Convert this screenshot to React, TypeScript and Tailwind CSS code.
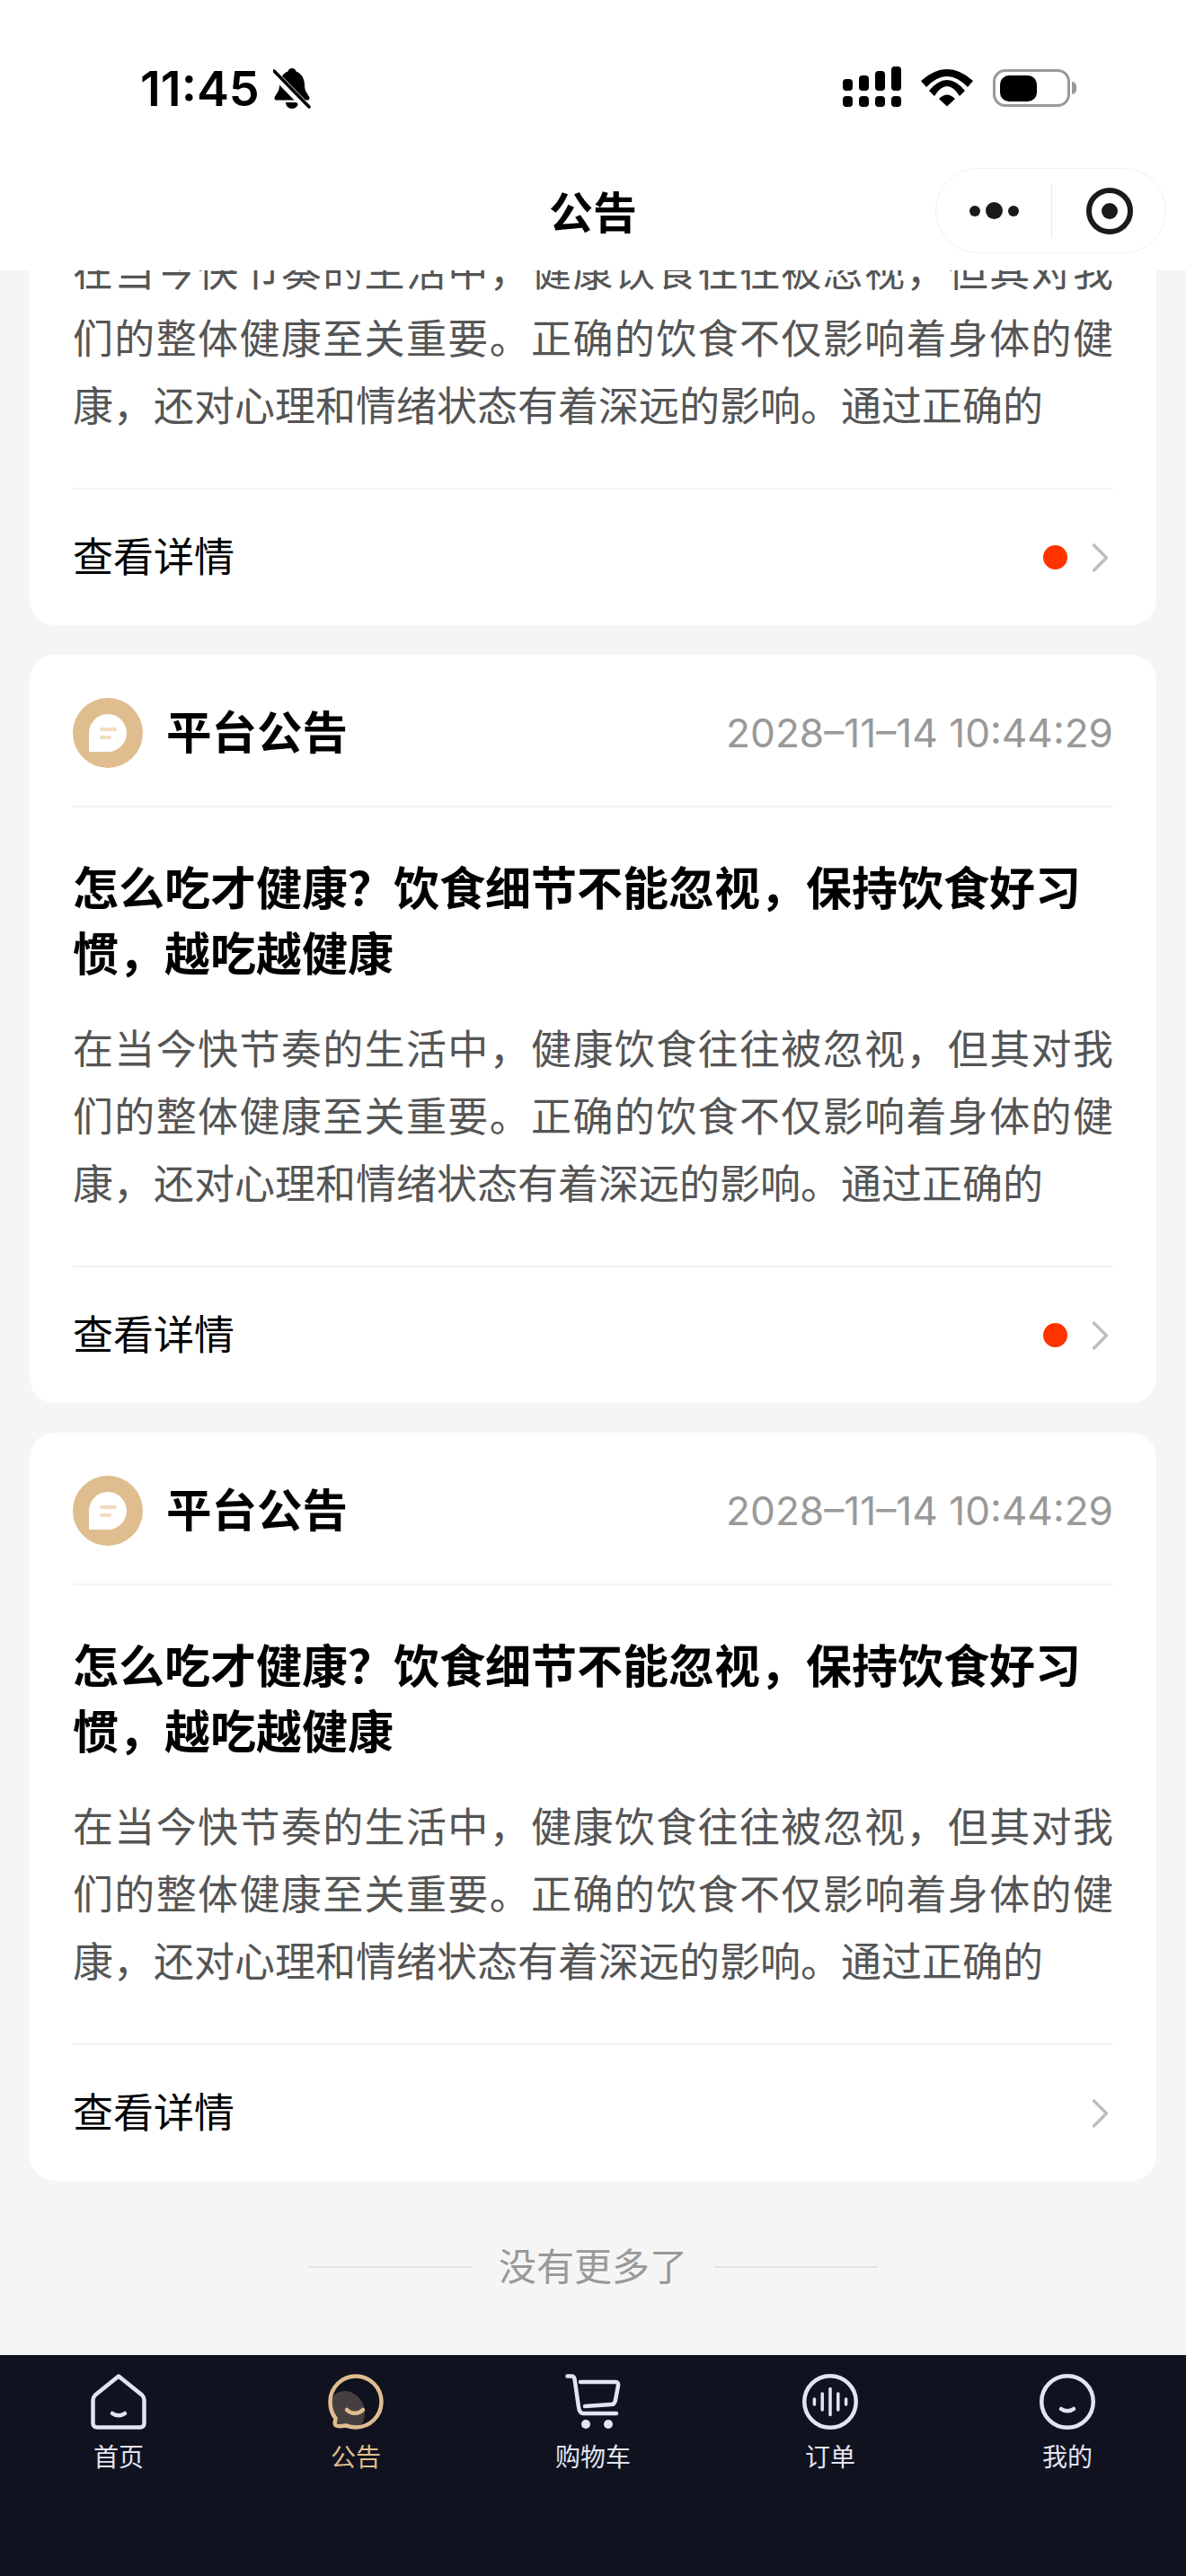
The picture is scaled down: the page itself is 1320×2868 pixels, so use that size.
const FONT = { fontFamily: '"Inter", "Noto Sans CJK SC", sans-serif' };

const notices = [{ dot: true }, { dot: true }, { dot: false }];

const TITLE = "怎么吃才健康\uFF1F饮食细节不能忽视\uFF0C保持饮食好习惯\uFF0C越吃越健康";
const BODY =
  "在当今快节奏的生活中\uFF0C健康饮食往往被忽视\uFF0C但其对我们的整体健康至关重要。正确的饮食不仅影响着身体的健康\uFF0C还对心理和情绪状态有着深远的影响。通过正确的";

function BellOff() {
  return (
    <svg width="42" height="46" viewBox="0 0 42 46" className="ml-[15px]">
      <path d="M21 0c2.500 0 4 1.500 4.500 3.500C32 6 35 12 35 19c0 6 3 9 5 12.500 1 2 .5 4-2 4H4c-2.500 0-3-2-2-4C4 28 7 25 7 19 7 12 10 6 16.500 3.500 17 1.500 18.500 0 21 0z" fill="#000" />
      <path d="M14 38h14c0 4-3 7-7 7s-7-3-7-7z" fill="#000" />
      <path d="M1 6l38 39" stroke="#fff" strokeWidth="9" />
      <path d="M1 3l39 40" stroke="#000" strokeWidth="3.500" strokeLinecap="round" />
    </svg>
  );
}

function Signal() {
  const heights = [13, 17, 22, 27];
  return (
    <div className="flex items-end gap-[7px]">
      {heights.map((h, i) => (
        <div key={i} className="flex w-[11px] flex-col gap-[6px]">
          <div className="rounded-[4px] bg-black" style={{ height: h }} />
          <div className="h-[12px] rounded-[4px] bg-black" />
        </div>
      ))}
    </div>
  );
}

function Wifi() {
  return (
    <svg width="58" height="42" viewBox="0 0 58 42" fill="#000">
      <path d="M0 13Q29-13 58 13L52 20Q29-4 6 20Z" />
      <path d="M9 24Q29 0 49 24L43 30Q29 8 15 30Z" />
      <path d="M20 33Q29 24 38 33L29 41.500Z" />
    </svg>
  );
}

function Battery() {
  return (
    <div className="flex items-center gap-[2px]">
      <div className="flex h-[42px] w-[86px] items-center rounded-[14px] border-[3px] border-[#999] px-[5px]">
        <div className="h-[29px] w-[41px] rounded-[10px] bg-black" />
      </div>
      <div className="h-[14px] w-[5px] rounded-r-full bg-[#999]" />
    </div>
  );
}

function StatusBar() {
  return (
    <div className="flex h-[187px] items-start justify-between pl-[156px] pr-[122px] pt-[74px]">
      <div className="flex items-center">
        <span className="text-[54px] font-semibold leading-[50px] text-black">11:45</span>
        <BellOff />
      </div>
      <div className="flex items-end gap-[22px]">
        <Signal />
        <Wifi />
        <Battery />
      </div>
    </div>
  );
}

function NavBar() {
  return (
    <div className="relative flex h-[114px] items-start justify-center pt-[23px]">
      <span className="text-[49px] font-semibold leading-[56px] text-black">公告</span>
      <div className="absolute right-[22px] top-0 flex h-[95px] w-[257px] items-center rounded-full border border-[#f0f0f0] bg-white">
        <div className="flex w-[128px] items-center justify-center gap-[6px]">
          <span className="size-[12px] rounded-full bg-[#1a1a1a]" />
          <span className="size-[19px] rounded-full bg-[#1a1a1a]" />
          <span className="size-[12px] rounded-full bg-[#1a1a1a]" />
        </div>
        <div className="h-[60px] w-px bg-[#e8e8e8]" />
        <div className="flex flex-1 items-center justify-center pl-[2px]">
          <div className="flex size-[52px] items-center justify-center rounded-full border-[6px] border-[#1a1a1a]">
            <span className="size-[18px] rounded-full bg-[#1a1a1a]" />
          </div>
        </div>
      </div>
    </div>
  );
}

function Chevron() {
  return (
    <svg width="18" height="32" viewBox="0 0 18 32" fill="none" stroke="#bdbdbd" strokeWidth="3.500">
      <path d="M1.500 1l15 15-15 15" />
    </svg>
  );
}

function NoticeCard({ dot }: { dot: boolean }) {
  return (
    <article className="rounded-[28px] bg-white px-[48px]">
      <div className="flex h-[170px] items-center justify-between border-b-2 border-[#f3f3f3] pt-[6px]">
        <div className="flex items-center gap-[26px]">
          <div className="flex size-[78px] items-center justify-center rounded-full bg-[#dfbd8f]">
            <div className="flex size-[42px] flex-col justify-center gap-[5px] rounded-full rounded-bl-[8px] bg-white pl-[12px]">
              <span className="h-[4px] w-[19px] rounded-full bg-[#f0dcbf]" />
              <span className="h-[4px] w-[13px] rounded-full bg-[#f0dcbf]" />
            </div>
          </div>
          <span className="text-[50.500px] font-semibold leading-[60px] text-black">平台公告</span>
        </div>
        <span className="text-[44.200px] leading-[54px] text-[#999]">2028–11–14 10:44:29</span>
      </div>
      <div className="pt-[54px]">
        <h2 className="text-[51px] font-bold leading-[73px] text-black">{TITLE}</h2>
        <p className="mt-[32px] h-[225px] overflow-hidden text-justify text-[45px] leading-[75px] text-[#555]">{BODY}</p>
      </div>
      <div className="mt-[53px] flex h-[153px] items-center justify-between border-t-2 border-[#f3f3f3]">
        <span className="text-[45px] leading-[60px] text-black">查看详情</span>
        <div className="flex items-center gap-[27px] pr-[6px]">
          {dot && <span className="size-[27px] rounded-full bg-[#ff3300]" />}
          <Chevron />
        </div>
      </div>
    </article>
  );
}

function HomeIcon() {
  return (
    <svg width="62" height="62" viewBox="0 0 62 62" fill="none" stroke="#e3e3f3" strokeWidth="4.500" strokeLinejoin="round">
      <path d="M31 2.500L5 23.500c-1.500 1.500-2.500 3-2.500 5.500v26c0 3 2 4.500 4.500 4.500h48c2.500 0 4.500-1.500 4.500-4.500V29c0-2.500-1-4-2.500-5.500z" />
      <path d="M24 44c4 3 10 3 14 0" strokeLinecap="round" />
    </svg>
  );
}

function ChatIcon() {
  return (
    <svg width="62" height="62" viewBox="0 0 62 62" fill="none">
      <path d="M4 30c0-6 7-11 15-11 11 0 22 11 22 24 0 7-2 12-6 16H10l-4-4 2-5c-3-6-4-13-4-20z" fill="#45403f" />
      <path d="M31 2.500c15.500 0 28.500 12.500 28.500 28.500S46.500 59.500 31 59.500c-5 0-8-1-11-2-3 .5-9 1.500-11 0-3-2-.5-5-.5-8C4.500 44.500 2.500 38.500 2.500 31 2.500 15 15.500 2.500 31 2.500z" stroke="#dfbd8f" strokeWidth="4.500" />
      <path d="M21 40c5 5 13 5 18 0" stroke="#dfbd8f" strokeWidth="4.500" strokeLinecap="round" />
    </svg>
  );
}

function CartIcon() {
  return (
    <svg width="62" height="62" viewBox="0 0 62 62" fill="none" stroke="#e3e3f3" strokeWidth="4.500" strokeLinecap="round" strokeLinejoin="round">
      <path d="M2.500 2.500H7c2 0 3 1 3.500 3L15 37c.5 4 2 7 5.500 7H57" />
      <path d="M17 9h39c2.500 0 3.500 1.500 3 4l-3 16c-.5 3-2 5-5 5l-29 2" />
      <circle cx="23" cy="56" r="5" fill="#e3e3f3" stroke="none" />
      <circle cx="48" cy="56" r="5" fill="#e3e3f3" stroke="none" />
    </svg>
  );
}

function OrderIcon() {
  return (
    <svg width="62" height="62" viewBox="0 0 62 62" fill="none" stroke="#e3e3f3" strokeLinecap="round">
      <circle cx="31" cy="31" r="28.750" strokeWidth="4.500" />
      <path d="M13.400 28v6M22.200 22v18M31 16.500v29M39.800 22v18M48.600 28v6" strokeWidth="3.500" />
    </svg>
  );
}

function MeIcon() {
  return (
    <svg width="62" height="62" viewBox="0 0 62 62" fill="none" stroke="#e3e3f3" strokeWidth="4.500" strokeLinecap="round">
      <circle cx="31" cy="31" r="28.750" />
      <path d="M24 39c4 3 10 3 14 0" />
    </svg>
  );
}

const tabs = [
  { label: "首页", icon: <HomeIcon /> },
  { label: "公告", icon: <ChatIcon />, active: true },
  { label: "购物车", icon: <CartIcon /> },
  { label: "订单", icon: <OrderIcon /> },
  { label: "我的", icon: <MeIcon /> },
];

export default function App() {
  return (
    <div className="flex h-[2868px] w-[1320px] flex-col overflow-hidden bg-[#f5f5f5]" style={FONT}>
      <header className="relative z-10 h-[301px] shrink-0 bg-white">
        <StatusBar />
        <NavBar />
      </header>

      <main className="flex-1 overflow-hidden px-[33px]">
        {/* list is scrolled down a bit, first card is cut by the header */}
        <div className="-mt-[438px] flex flex-col gap-[33px]">
          {notices.map((n, i) => (
            <NoticeCard key={i} dot={n.dot} />
          ))}
        </div>
        <div className="mt-[68px] flex items-center justify-center gap-[30px]">
          <span className="h-[2px] w-[182px] bg-[#e4e4e4]" />
          <span className="text-[42px] leading-[56px] text-[#999]">没有更多了</span>
          <span className="h-[2px] w-[182px] bg-[#e4e4e4]" />
        </div>
      </main>

      <nav className="grid h-[246px] shrink-0 grid-cols-5 bg-[#10131f] pt-[21px]">
        {tabs.map((t) => (
          <div key={t.label} className="flex flex-col items-center">
            <div className="flex size-[62px] items-center justify-center">{t.icon}</div>
            <span className={`mt-[13px] text-[28px] leading-[36px] ${t.active ? "text-[#dfbd8f]" : "text-[#e3e3f3]"}`}>
              {t.label}
            </span>
          </div>
        ))}
      </nav>
    </div>
  );
}
